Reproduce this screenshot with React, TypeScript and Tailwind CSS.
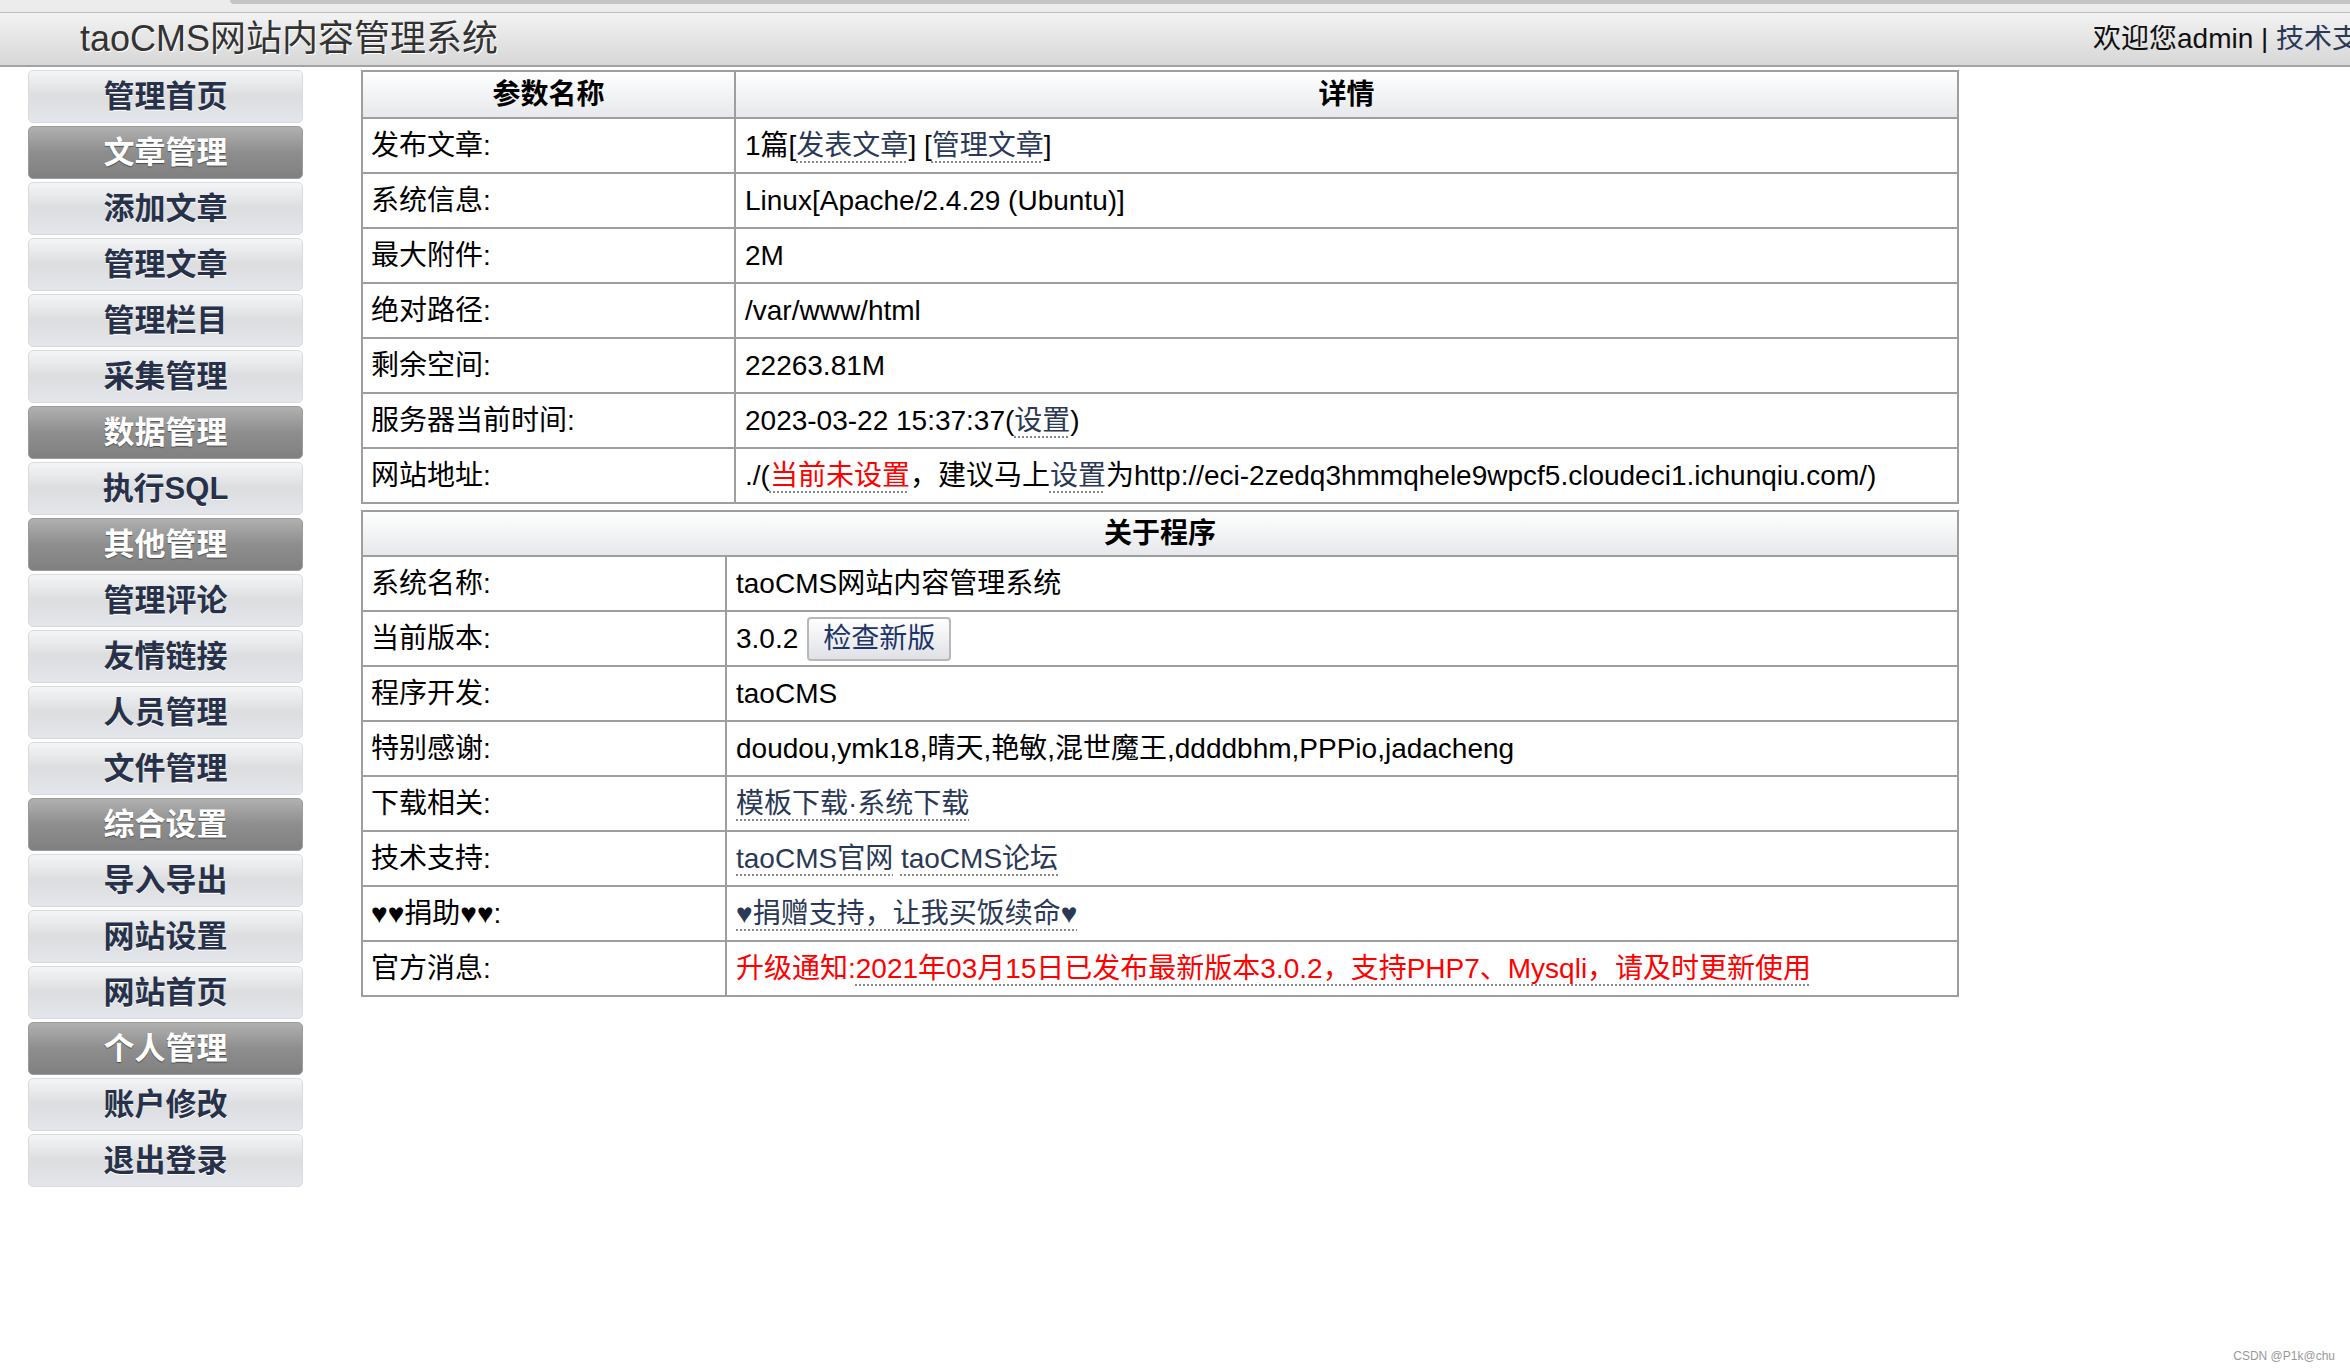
import type { ReactNode } from "react";

type NavItem = { label: string; dark?: boolean };

const navItems: NavItem[] = [
  { label: "管理首页" },
  { label: "文章管理", dark: true },
  { label: "添加文章" },
  { label: "管理文章" },
  { label: "管理栏目" },
  { label: "采集管理" },
  { label: "数据管理", dark: true },
  { label: "执行SQL" },
  { label: "其他管理", dark: true },
  { label: "管理评论" },
  { label: "友情链接" },
  { label: "人员管理" },
  { label: "文件管理" },
  { label: "综合设置", dark: true },
  { label: "导入导出" },
  { label: "网站设置" },
  { label: "网站首页" },
  { label: "个人管理", dark: true },
  { label: "账户修改" },
  { label: "退出登录" },
];

const Link = ({ children, red }: { children: ReactNode; red?: boolean }) => (
  <a
    href="#"
    className={
      red
        ? "text-[#ff0000] underline decoration-dotted decoration-[#888] decoration-2 underline-offset-[7px]"
        : "text-[#2b3956] underline decoration-dotted decoration-[#888] decoration-2 underline-offset-[7px]"
    }
  >
    {children}
  </a>
);

const NavButton = ({ item }: { item: NavItem }) => (
  <a
    href="#"
    className={
      item.dark
        ? "flex h-[53px] items-center justify-center rounded-[5px] border border-[#9c9c9c] bg-linear-to-b from-[#b0b0b0] via-[#8e8e8e] to-[#808080] text-[31px] font-bold text-white [text-shadow:0_1px_1px_rgba(0,0,0,0.45)]"
        : "flex h-[53px] items-center justify-center rounded-[5px] border border-[#d9dbdf] bg-linear-to-b from-[#f4f5f7] via-[#dcdddf] to-[#e3e6eb] text-[31px] font-bold text-[#27324a] [text-shadow:0_1px_0_#fff]"
    }
  >
    {item.label}
  </a>
);

const Row = ({ name, children, first }: { name: string; children: ReactNode; first: string }) => (
  <tr className="h-[55px]">
    <td className={`${first} border-2 border-[#9e9e9e] px-[8px]`}>{name}</td>
    <td className="border-2 border-[#9e9e9e] px-[9px] whitespace-nowrap">{children}</td>
  </tr>
);

export default function App() {
  return (
    <div
      className="relative min-h-screen bg-white text-[28px] leading-none text-black"
      style={{ fontFamily: '"Liberation Sans", "Noto Sans CJK SC", sans-serif' }}
    >
      {/* top strip */}
      <div className="h-[12px] bg-[#ececec]">
        <div className="ml-[230px] h-[4px] rounded-bl-[12px] bg-[#c4c4c4]" />
      </div>
      <div className="h-px bg-[#bdbdbd]" />

      {/* header */}
      <div className="flex h-[54px] items-center overflow-hidden whitespace-nowrap border-b-2 border-[#a3a3a3] bg-linear-to-b from-[#f3f3f3] to-[#d7d7d7]">
        <div className="pl-[80px] text-[36px] text-[#333] [text-shadow:1px_1px_0_#fff]">taoCMS网站内容管理系统</div>
        <div className="flex-1" />
        <div className="w-[257px] shrink-0 overflow-hidden text-[28px] text-[#111]">
          欢迎您admin | <a href="#" className="text-[#2b3956]">技术支持</a>
        </div>
      </div>

      <div className="flex pt-[3px]">
        {/* sidebar */}
        <div className="ml-[28px] flex w-[275px] shrink-0 flex-col gap-[3px]">
          {navItems.map((item) => (
            <NavButton key={item.label} item={item} />
          ))}
        </div>

        {/* main */}
        <div className="ml-[58px] flex w-[1598px] flex-col gap-[6px]">
          <table className="w-full border-collapse border-2 border-[#9e9e9e]">
            <thead>
              <tr className="h-[47px] bg-linear-to-b from-white to-[#e6e8eb]">
                <th className="w-[373px] border-2 border-[#9e9e9e] font-bold">参数名称</th>
                <th className="border-2 border-[#9e9e9e] font-bold">详情</th>
              </tr>
            </thead>
            <tbody>
              <Row name="发布文章:" first="w-[373px]">
                1篇[<Link>发表文章</Link>] [<Link>管理文章</Link>]
              </Row>
              <Row name="系统信息:" first="w-[373px]">Linux[Apache/2.4.29 (Ubuntu)]</Row>
              <Row name="最大附件:" first="w-[373px]">2M</Row>
              <Row name="绝对路径:" first="w-[373px]">/var/www/html</Row>
              <Row name="剩余空间:" first="w-[373px]">22263.81M</Row>
              <Row name="服务器当前时间:" first="w-[373px]">
                2023-03-22 15:37:37(<Link>设置</Link>)
              </Row>
              <Row name="网站地址:" first="w-[373px]">
                ./(<Link red>当前未设置</Link>，建议马上<Link>设置</Link>为http://eci-2zedq3hmmqhele9wpcf5.cloudeci1.ichunqiu.com/)
              </Row>
            </tbody>
          </table>

          <table className="w-full border-collapse border-2 border-[#9e9e9e]">
            <thead>
              <tr className="h-[45px] bg-linear-to-b from-white to-[#e6e8eb]">
                <th colSpan={2} className="border-2 border-[#9e9e9e] font-bold">
                  关于程序
                </th>
              </tr>
            </thead>
            <tbody>
              <Row name="系统名称:" first="w-[364px]">taoCMS网站内容管理系统</Row>
              <Row name="当前版本:" first="w-[364px]">
                <span className="inline-flex items-center gap-[9px]">
                  3.0.2
                  <button className="h-[44px] rounded-[4px] border-2 border-[#b8b8b8] bg-linear-to-b from-white to-[#dfe1e5] px-[14px] text-[28px] text-[#1d3569]">
                    检查新版
                  </button>
                </span>
              </Row>
              <Row name="程序开发:" first="w-[364px]">taoCMS</Row>
              <Row name="特别感谢:" first="w-[364px]">doudou,ymk18,晴天,艳敏,混世魔王,ddddbhm,PPPio,jadacheng</Row>
              <Row name="下载相关:" first="w-[364px]">
                <Link>模板下载·系统下载</Link>
              </Row>
              <Row name="技术支持:" first="w-[364px]">
                <Link>taoCMS官网</Link> <Link>taoCMS论坛</Link>
              </Row>
              <Row name="♥♥捐助♥♥:" first="w-[364px]">
                <Link>♥捐赠支持，让我买饭续命♥</Link>
              </Row>
              <Row name="官方消息:" first="w-[364px]">
                <span className="text-[#ff0000]">升级通知:</span>
                <Link red>2021年03月15日已发布最新版本3.0.2，支持PHP7、Mysqli，请及时更新使用</Link>
              </Row>
            </tbody>
          </table>
        </div>
      </div>

      <div className="absolute bottom-[8px] right-[15px] text-[12px] text-[#999]">CSDN @P1k@chu</div>
    </div>
  );
}
